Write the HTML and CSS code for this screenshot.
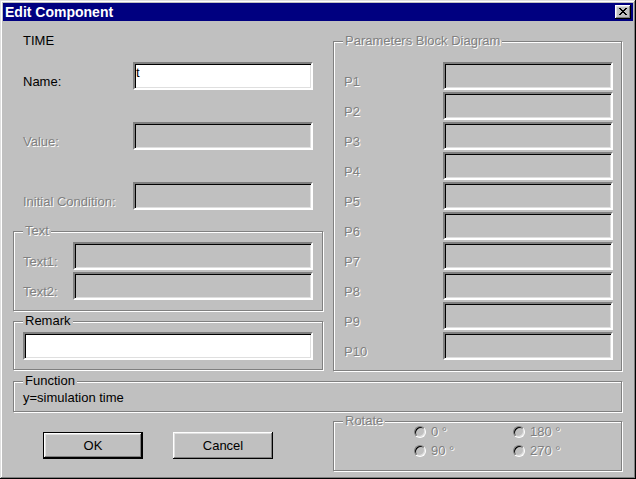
FILE: index.html
```html
<!DOCTYPE html>
<html>
<head>
<meta charset="utf-8">
<title>Edit Component</title>
<link rel="stylesheet" href="styles.css">
</head>
<body>
<div class="window">
  <div class="titlebar">
    <span class="title">Edit Component</span>
    <span class="close-btn">
      <svg width="8" height="7" viewBox="0 0 8 7" shape-rendering="crispEdges">
        <path fill="#000" d="M0 0h2v1H0zM6 0h2v1H6zM1 1h2v1H1zM5 1h2v1H5zM2 2h4v1H2zM3 3h2v1H3zM2 4h4v1H2zM1 5h2v1H1zM5 5h2v1H5zM0 6h2v1H0zM6 6h2v1H6z"/>
      </svg>
    </span>
  </div>
  <div class="client">
    <div class="main">
      <div class="left">
        <div class="caption">TIME</div>
        <div class="row row-first">
          <span class="lbl">Name:</span>
          <div class="input white">t</div>
        </div>
        <div class="row">
          <span class="lbl disabled">Value:</span>
          <div class="input"></div>
        </div>
        <div class="row">
          <span class="lbl disabled">Initial Condition:</span>
          <div class="input"></div>
        </div>
        <div class="group group-text">
          <span class="legend disabled">Text</span>
          <div class="trow">
            <span class="tlbl disabled">Text1:</span>
            <div class="input wide"></div>
          </div>
          <div class="trow">
            <span class="tlbl disabled">Text2:</span>
            <div class="input wide"></div>
          </div>
        </div>
        <div class="group group-remark">
          <span class="legend">Remark</span>
          <div class="input white full"></div>
        </div>
      </div>
      <div class="group group-params">
        <span class="legend disabled">Parameters Block Diagram</span>
        <div class="prow"><span class="plbl disabled">P1</span><div class="input param"></div></div>
        <div class="prow"><span class="plbl disabled">P2</span><div class="input param"></div></div>
        <div class="prow"><span class="plbl disabled">P3</span><div class="input param"></div></div>
        <div class="prow"><span class="plbl disabled">P4</span><div class="input param"></div></div>
        <div class="prow"><span class="plbl disabled">P5</span><div class="input param"></div></div>
        <div class="prow"><span class="plbl disabled">P6</span><div class="input param"></div></div>
        <div class="prow"><span class="plbl disabled">P7</span><div class="input param"></div></div>
        <div class="prow"><span class="plbl disabled">P8</span><div class="input param"></div></div>
        <div class="prow"><span class="plbl disabled">P9</span><div class="input param"></div></div>
        <div class="prow"><span class="plbl disabled">P10</span><div class="input param"></div></div>
      </div>
    </div>
    <div class="group group-function">
      <span class="legend">Function</span>
      <div class="func-text">y=simulation time</div>
    </div>
    <div class="bottom">
      <div class="buttons">
        <button class="btn default">OK</button>
        <button class="btn">Cancel</button>
      </div>
      <div class="group group-rotate">
        <span class="legend disabled">Rotate</span>
        <div class="radios">
          <div class="radio-item"><span class="radio"></span><span class="disabled">0 °</span></div>
          <div class="radio-item"><span class="radio"></span><span class="disabled">180 °</span></div>
          <div class="radio-item"><span class="radio"></span><span class="disabled">90 °</span></div>
          <div class="radio-item"><span class="radio"></span><span class="disabled">270 °</span></div>
        </div>
      </div>
    </div>
  </div>
</div>
</body>
</html>
```
FILE: styles.css
```css
html, body {
  margin: 0;
  padding: 0;
}

body {
  font-family: "Liberation Sans", Arial, sans-serif;
  font-size: 13px;
  line-height: 15px;
  color: #000;
  background: #c0c0c0;
}

.window {
  width: 636px;
  height: 479px;
  box-sizing: border-box;
  padding: 3px;
  background: #c0c0c0;
  box-shadow: inset -1px -1px #000, inset 1px 1px #dfdfdf, inset -2px -2px #808080, inset 2px 2px #fff;
}

.titlebar {
  height: 18px;
  background: #000080;
  color: #fff;
  display: flex;
  align-items: center;
  justify-content: space-between;
  padding: 0 2px 0 2px;
}

.title {
  font-weight: bold;
  font-size: 14px;
  line-height: 18px;
}

.close-btn {
  width: 16px;
  height: 14px;
  box-sizing: border-box;
  background: #c0c0c0;
  box-shadow: inset -1px -1px #000, inset 1px 1px #fff, inset -2px -2px #808080, inset 2px 2px #dfdfdf;
  display: flex;
  align-items: center;
  justify-content: center;
  padding: 0 1px 1px 0;
}

.close-btn svg {
  display: block;
}

.client {
  padding: 12px 11px 0 10px;
}

.main {
  display: grid;
  grid-template-columns: 310px 289px;
  column-gap: 10px;
  align-items: start;
}

.disabled {
  color: #808080;
  text-shadow: 1px 1px 0 #fff;
}

.caption {
  padding-left: 10px;
  height: 15px;
}

.row {
  display: flex;
  align-items: flex-end;
  padding: 0 10px;
  margin-top: 32px;
}

.row-first {
  margin-top: 14px;
}

.lbl {
  width: 110px;
  margin-bottom: 1px;
  white-space: nowrap;
}

.input {
  width: 180px;
  height: 28px;
  box-sizing: border-box;
  border: 2px solid;
  border-color: #808080 #fff #fff #808080;
  box-shadow: inset 1px 1px #000, inset -1px -1px #dfdfdf;
  background: #c0c0c0;
  padding: 1px 1px;
}

.input.white {
  background: #fff;
}

.group {
  position: relative;
  border: 1px solid #808080;
  box-shadow: inset 1px 1px #fff, 1px 1px #fff;
}

.legend {
  position: absolute;
  left: 9px;
  top: -9px;
  padding: 0 2px;
  background: #c0c0c0;
  white-space: nowrap;
}

.group-text {
  margin-top: 21px;
  padding: 10px 9px;
}

.trow {
  display: flex;
  align-items: flex-end;
}

.trow + .trow {
  margin-top: 2px;
}

.tlbl {
  width: 50px;
  margin-bottom: 1px;
}

.input.wide {
  width: 240px;
}

.group-remark {
  margin-top: 10px;
  padding: 10px 9px 9px 9px;
}

.input.full {
  width: 290px;
}

.group-params {
  margin-top: 8px;
  padding: 20px 8px 10px 10px;
}

.prow {
  display: flex;
  align-items: flex-end;
}

.prow + .prow {
  margin-top: 2px;
}

.plbl {
  width: 99px;
  margin-bottom: 1px;
}

.input.param {
  width: 170px;
}

.group-function {
  margin-top: 10px;
  padding: 8px 9px 6px 9px;
}

.bottom {
  display: flex;
  align-items: flex-start;
  margin-top: 9px;
}

.buttons {
  display: flex;
  gap: 30px;
  padding-left: 30px;
  margin-top: 11px;
}

.btn {
  width: 100px;
  height: 27px;
  padding: 0;
  border: none;
  font: inherit;
  color: #000;
  background: #c0c0c0;
  box-shadow: inset -1px -1px #000, inset 1px 1px #fff, inset -2px -2px #808080, inset 2px 2px #dfdfdf;
}

.btn.default {
  box-shadow: inset 0 0 0 1px #000, inset -2px -2px #000, inset 2px 2px #fff, inset -3px -3px #808080, inset 3px 3px #dfdfdf;
}

.group-rotate {
  margin-left: auto;
  width: 289px;
  box-sizing: border-box;
  padding: 2px 0 12px 80px;
}

.radios {
  display: grid;
  grid-template-columns: 99px auto;
  row-gap: 4px;
}

.radio-item {
  display: flex;
  align-items: center;
  gap: 5px;
}

.radio {
  width: 12px;
  height: 12px;
  box-sizing: border-box;
  border-radius: 50%;
  border: 1px solid;
  border-color: #808080 #fff #fff #808080;
  box-shadow: inset 1px 1px #000, inset -1px -1px #dfdfdf;
  background: #c0c0c0;
}
```
